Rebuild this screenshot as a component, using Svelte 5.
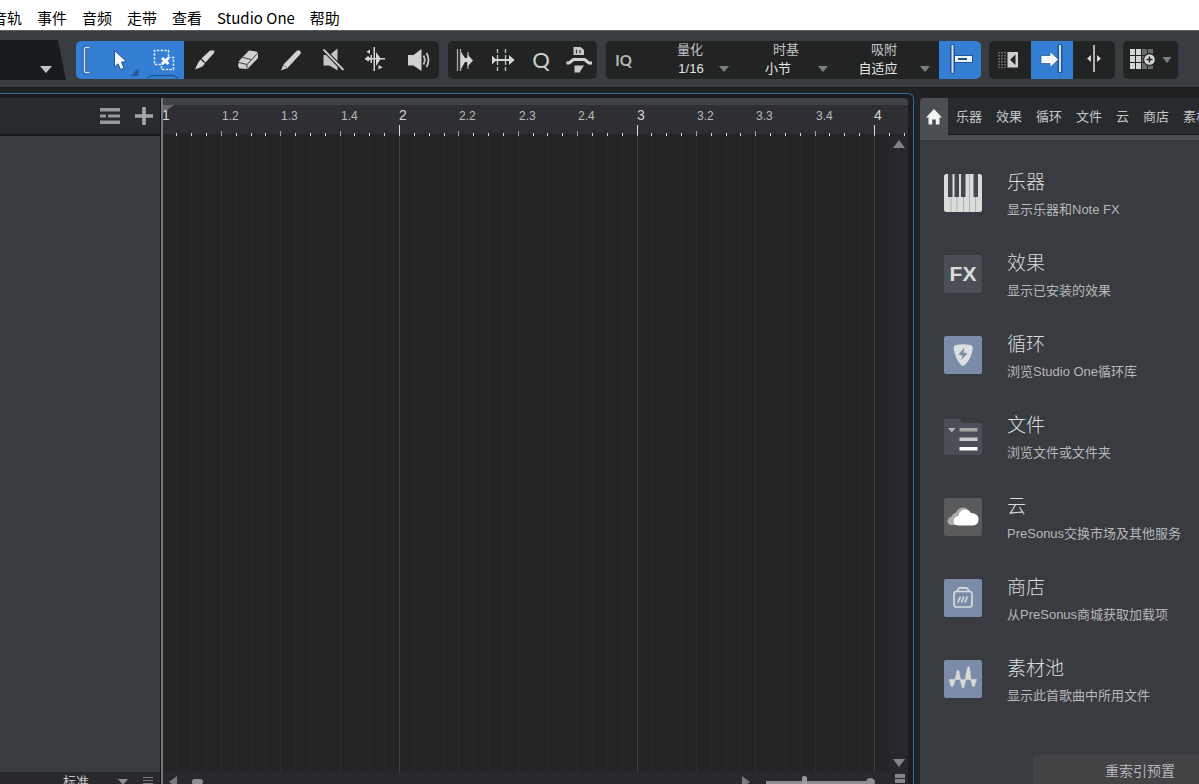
<script>
  const menus = ['音轨', '事件', '音频', '走带', '查看', 'Studio One', '帮助'];

  const fields = [
    { id: 'quantize', label: '量化', options: ['1/16', '1/8', '1/4'] },
    { id: 'timebase', label: '时基', options: ['小节', '秒', '帧'] },
    { id: 'snap', label: '吸附', options: ['自适应', '小节', '量化'] }
  ];

  const tabs = ['乐器', '效果', '循环', '文件', '云', '商店', '素材池'];

  const entries = [
    { icon: 'keys', title: '乐器', text: '显示乐器和Note FX' },
    { icon: 'fx', title: '效果', text: '显示已安装的效果' },
    { icon: 'loops', title: '循环', text: '浏览Studio One循环库' },
    { icon: 'files', title: '文件', text: '浏览文件或文件夹' },
    { icon: 'cloud', title: '云', text: 'PreSonus交换市场及其他服务' },
    { icon: 'shop', title: '商店', text: '从PreSonus商城获取加载项' },
    { icon: 'pool', title: '素材池', text: '显示此首歌曲中所用文件' }
  ];

  const BAR_WIDTH = 237.5;
  let timelineWidth = $state(0);

  // One tick per sixteenth note, up to the right edge of the timeline.
  const ticks = $derived(
    Array.from({ length: Math.ceil((timelineWidth * 16) / BAR_WIDTH) }, (_, i) => ({
      x: Math.floor((i * BAR_WIDTH) / 16),
      kind: i % 16 === 0 ? 'bar' : i % 4 === 0 ? 'beat' : 'step',
      label:
        i % 16 === 0
          ? `${i / 16 + 1}`
          : i % 4 === 0
            ? `${Math.floor(i / 16) + 1}.${(i % 16) / 4 + 1}`
            : ''
    }))
  );
  const tickTop = { bar: 20, beat: 26, step: 28 };

  let tool = $state('arrow');
  let zoom = $state(38);

  const tools = [
    { id: 'arrow', name: '箭头工具' },
    { id: 'range', name: '范围工具' },
    { id: 'split', name: '分割工具' },
    { id: 'erase', name: '擦除工具' },
    { id: 'paint', name: '绘制工具' },
    { id: 'mute', name: '静音工具' },
    { id: 'bend', name: '弯曲工具' },
    { id: 'listen', name: '监听工具' }
  ];
</script>

{#snippet toolIcon(id)}
  <svg class="ico" width="43" height="38" viewBox="0 0 43 38" aria-hidden="true">
    {#if id === 'arrow'}
      <path d="M16.5 9.5 L28.5 20.5 L23.5 21.2 L26 27 L22.5 28.6 L20 22.8 L16.5 26Z" fill="#f4f6f8" stroke="#1f5593" stroke-width="1" />
      <path d="M40.500 27 V35 H32.500Z" fill="#235a9c" />
    {:else if id === 'range'}
      <g fill="none" stroke="#d9e8f8" stroke-width="1.500" stroke-dasharray="2.500 1.300">
        <path d="M20 23.500 H13.500 V9.500 H27.500 V16" />
        <path d="M27 16.500 H32.500 V28.500 H20.500 V23" />
      </g>
      <path d="M21 17 L27.500 23 M27.500 17 L21 23" stroke="#fff" stroke-width="3" />
      <path d="M6 37.500 L10 34.500 H33 L37 37.500" fill="none" stroke="#1f5797" stroke-width="1.500" />
    {:else if id === 'split'}
      <path d="M17.500 17.500 L26 9.500 L30.500 9.500 L30 12 L21.500 21.500Z M16.500 18.500 L21 22.500 L18.500 25.500 L11 28.500 L14 22Z" fill="#d4d6d6" />
    {:else if id === 'erase'}
      <path d="M12 20 L22 9.500 L29.500 10.500 L31 12.500 V17 L20.500 28 L12.500 27.500 L11 25Z" fill="#cfd1d1" />
      <path d="M12 21.500 L20 23.500 L30.500 12.500 M20 23.500 V27.500 M16 16.500 L24 18.500" fill="none" stroke="#3a3c3c" stroke-width="1" />
    {:else if id === 'paint'}
      <path d="M26.500 10 Q29 8.500 30.500 10.500 Q31.500 12 30 13.500 L17.500 27 L11 29.500 L13.500 23.500Z" fill="#d0d2d2" />
      <path d="M13 23.500 L17.500 27.500" stroke="#6c6f6f" stroke-width="1" />
    {:else if id === 'mute'}
      <path d="M10.500 14 H16.500 L24.500 7.500 V29.500 L16.500 24.500 H10.500Z" fill="#c4c6c6" />
      <path d="M10.500 8.500 L30.500 29" stroke="#212423" stroke-width="4" />
      <path d="M10.500 8.500 L30.500 29" stroke="#c8caca" stroke-width="1.800" />
    {:else if id === 'bend'}
      <g fill="#d4d6d6">
        <rect x="17.500" y="6" width="1.500" height="24" />
        <rect x="9" y="17" width="20" height="1.500" />
        <path d="M14 8.500 V13 L10.500 10.800Z M9 17.800 L12 15 L15 17.800 L12 20.500Z M20 11 L24 16.500 V19 L20 25Z M22.500 24 L26.500 26.300 L22.500 28.500Z" />
        <rect x="14.500" y="14" width="1.500" height="8" />
      </g>
    {:else if id === 'listen'}
      <path d="M9 14 H14.500 L22.500 8 V30 L14.500 24.500 H9Z" fill="#d0d2d2" />
      <path d="M24.500 14.500 Q27 19 24.500 23.500 M27.500 12 Q31.500 19 27.500 26" fill="none" stroke="#c4c6c6" stroke-width="1.800" />
    {/if}
  </svg>
{/snippet}

{#snippet entryIcon(id)}
  <svg class="tile" width="38" height="38" viewBox="0 0 38 38" aria-hidden="true">
    {#if id === 'keys'}
      <rect width="38" height="38" rx="2.500" fill="#dadcdc" />
      <g stroke="#adb0b1" stroke-width="1">
        <path d="M7 22V38M13 22V38M19.500 22V38M25.500 0V38M31.500 22V38" />
      </g>
      <g fill="#42474d">
        <rect x="4" width="4.500" height="23" /><rect x="10.500" width="4.500" height="23" />
        <rect x="17" width="4.500" height="23" /><rect x="29.500" width="4.500" height="23" />
      </g>
    {:else if id === 'fx'}
      <rect width="38" height="38" rx="2.500" fill="#4a4e55" />
      <text x="19" y="26" text-anchor="middle" class="fx">FX</text>
    {:else if id === 'loops'}
      <rect width="38" height="38" rx="2" fill="#7b8ca9" />
      <path d="M9.500 12 Q9.500 9.500 12 9 Q19 7.500 26.500 9 Q28.800 9.500 28.800 12 Q28 21 21.500 28.500 Q19 31 16.500 28.500 Q10.500 21 9.500 12Z" fill="#dcdfe0" />
      <path d="M20.500 11.500 L14.500 18.500 L18.500 19.500 L17 24 L23.500 17.500 L19.500 16.500Z" fill="#7b8ca9" />
    {:else if id === 'files'}
      <path d="M0 3.500 Q0 1.500 2 1.500 H14 Q15.500 1.500 16 3 L17.500 6 H36 Q38 6 38 8 V36 Q38 38 36 38 H2 Q0 38 0 36Z" fill="#4a4e56" />
      <path d="M4 11 H11.500 L7.800 15.500Z" fill="#b3b5b7" />
      <rect x="15.500" y="11" width="18" height="3.500" fill="#a4a6a8" />
      <rect x="15.500" y="20.500" width="18" height="3.500" fill="#c9cbcc" />
      <rect x="15.500" y="30" width="18" height="3.500" fill="#fff" />
    {:else if id === 'cloud'}
      <rect width="38" height="38" rx="2.500" fill="#595a5c" />
      <path d="M7 27 Q3.500 26.500 3.500 23 Q3.500 19.500 7.500 18.500 Q8.500 15.500 12 14.500 Q14.500 9 19.500 9.500 Q24 10 25 14 L18 27Z" fill="#a9abad" />
      <path d="M14 27.500 Q9.500 27 9.500 22.500 Q10 18.500 14.500 18 Q15.500 12 20.500 11.500 Q25.500 11.500 27 15 Q34.500 15 34.500 21.500 Q34.500 27 29 27.500Z" fill="#fff" />
    {:else if id === 'shop'}
      <rect width="38" height="38" rx="2" fill="#7b8ca9" />
      <g fill="none" stroke="#dadbd9" stroke-width="1.700">
        <rect x="10" y="12.500" width="18" height="15.500" rx="2.500" />
        <path d="M13 12.500 L14.500 9.500 Q15 8.800 16 8.800 H22 Q23 8.800 23.500 9.500 L25 12.500" />
        <path d="M13.800 23.500 L16.500 17.500 M17.300 23.500 L20 17.500 M20.800 23.500 L23.500 17.500" />
      </g>
    {:else if id === 'pool'}
      <rect width="38" height="38" rx="2" fill="#7b8ca9" />
      <path d="M5 19.500 H11 L13 11 Q14 9 15 11 L16.500 19.500 H21 L23.500 7.500 Q24.500 5.500 25.500 7.500 L27 19.500 H32.500 L30.500 26 Q29.500 28 28.500 26 L26.500 19.500 H21.800 L20 27 Q19 29.500 18 27 L16.200 19.500 H11.500 L9 26 Q8 28 7 26Z" fill="#d9dad6" stroke="#d9dad6" stroke-width=".5" />
    {/if}
  </svg>
{/snippet}

<div class="app">
  <nav class="menubar" aria-label="菜单">
    {#each menus as menu}
      <button>{menu}</button>
    {/each}
  </nav>

  <header class="toolbar">
    <button class="device" aria-label="选择设备">
      <svg width="66" height="40" viewBox="0 0 66 40" aria-hidden="true">
        <path d="M0 0 H58 L66 40 H0Z" fill="#191c1f" />
        <path d="M40 26 H52 L46 33Z" fill="#c4c6c8" />
      </svg>
    </button>

    <div class="group tools">
      <span class="bracket">
        <svg class="ico" width="22" height="38" viewBox="0 0 22 38" aria-hidden="true">
          <path d="M13.500 6.500 H9.500 Q8.500 6.500 8.500 7.500 V30.500 Q8.500 31.500 9.500 31.500 H13.500" fill="none" stroke="#235a9c" stroke-width="3.500" />
          <path d="M13.500 6.500 H9.500 Q8.500 6.500 8.500 7.500 V30.500 Q8.500 31.500 9.500 31.500 H13.500" fill="none" stroke="#d5e2ee" stroke-width="1.500" />
        </svg>
      </span>
      {#each tools as t}
        <button
          class:on={t.id === tool || (tool === 'arrow' && t.id === 'range')}
          aria-label={t.name}
          onclick={() => (tool = t.id)}>{@render toolIcon(t.id)}</button>
      {/each}
    </div>

    <div class="group actions">
      <button aria-label="去除静音">
        <svg class="ico" width="37" height="38" viewBox="0 0 37 38" aria-hidden="true">
          <path d="M9.500 8V30M12.500 8V30M20 11V28" stroke="#a9abab" stroke-width="1.300" />
          <path d="M13 11 L17 17 H19.500 V13.500 L25 19.500 L19.500 25.500 V21 H17 L13 28Z" fill="#d4d6d6" />
        </svg>
      </button>
      <button aria-label="拉伸">
        <svg class="ico" width="37" height="38" viewBox="0 0 37 38" aria-hidden="true">
          <path d="M12.500 8V30M20.500 8V30" stroke="#bbbdbd" stroke-width="1.400" stroke-dasharray="4 2" />
          <path d="M7 18 H29 V20 H7Z M7 14.500 L11.500 19 L7 23.500Z M24 14 L29.500 19 L24 24Z" fill="#d4d6d6" />
        </svg>
      </button>
      <button class="q" aria-label="量化">Q</button>
      <button aria-label="宏">
        <svg class="ico" width="37" height="38" viewBox="0 0 37 38" aria-hidden="true">
          <path d="M13.500 6 H20.500 L24 9 V14 H13.500Z" fill="#c9cbcb" />
          <path d="M16.500 8.500 V12.500 M20 9 V12.500" stroke="#3a3c3c" stroke-width="1.200" />
          <path d="M6.500 22 H9 L13.500 18.500 H24.500 L29 22 H32" fill="none" stroke="#d0d2d2" stroke-width="3" stroke-linejoin="round" />
          <path d="M14.500 24.500 H24 L19.500 31.500 H14.500Z" fill="#c9cbcb" />
        </svg>
      </button>
    </div>

    <div class="group settings">
      <button class="iq">IQ</button>
      {#each fields as f}
        <div class="field {f.id}">
          <label for={f.id}>{f.label}</label>
          <div class="pick">
            <select id={f.id}>
              {#each f.options as o}<option>{o}</option>{/each}
            </select>
            <svg width="10" height="6" viewBox="0 0 10 6" aria-hidden="true"><path d="M0 0H10L5 6Z" fill="#7c7f80" /></svg>
          </div>
        </div>
      {/each}
      <button class="on snapbtn" aria-label="启用吸附">
        <svg class="ico" width="42" height="38" viewBox="0 0 42 38" aria-hidden="true">
          <rect x="11" y="3" width="5" height="30" rx="2" fill="#22568f" />
          <rect x="12.500" y="4" width="2" height="28" fill="#cfdeed" />
          <rect x="16" y="14" width="18" height="8" fill="#22568f" />
          <rect x="16" y="15" width="17" height="6" fill="#eef3f8" />
          <rect x="19" y="17" width="9" height="2" fill="#22568f" />
        </svg>
      </button>
    </div>

    <div class="group follow">
      <button aria-label="时间线">
        <svg class="ico" width="42" height="38" viewBox="0 0 42 38" aria-hidden="true">
          <path d="M10 11V27M13 11V27M16 11V27" stroke="#8f9292" stroke-width="1.300" stroke-dasharray="1.500 1.500" />
          <rect x="18.500" y="11" width="10.500" height="15.500" fill="#cfd1d1" />
          <path d="M26.500 13.500 V24 L21 18.800Z" fill="#212423" />
        </svg>
      </button>
      <button class="on" aria-label="自动滚动">
        <svg class="ico" width="42" height="38" viewBox="0 0 42 38" aria-hidden="true">
          <rect x="26.500" y="3" width="5" height="29" rx="2" fill="#22568f" />
          <path d="M10 14.500 H19 V10.500 L27.500 18.500 L19 26.500 V22.500 H10Z" fill="#f4f6f8" stroke="#22568f" stroke-width=".7" />
          <rect x="28" y="4" width="2" height="27" fill="#cfdeed" />
        </svg>
      </button>
      <button aria-label="光标跟随">
        <svg class="ico" width="42" height="38" viewBox="0 0 42 38" aria-hidden="true">
          <rect x="20" y="4" width="2" height="27" fill="#aeb0b0" />
          <path d="M18 14 V21 L14 17.500Z M24 14 V21 L28 17.500Z" fill="#d4d6d6" />
        </svg>
      </button>
    </div>

    <div class="group view">
      <button aria-label="网格选项">
        <svg class="ico" width="55" height="38" viewBox="0 0 55 38" aria-hidden="true">
          <path d="M7 8h5v6H7zM13 8h5v6h-5zM7 15h5v6H7zM13 15h5v6h-5zM7 22h5v6H7zM13 22h5v6h-5z" fill="#d4d6d6" />
          <path d="M19 8h5v6h-5zM25 8h5v6h-5zM19 15h5v6h-5zM19 22h5v6h-5zM25 22h5v6h-5z" fill="#686b6c" />
          <circle cx="26.500" cy="18.500" r="6.500" fill="#212423" />
          <circle cx="26.500" cy="18.500" r="5.300" fill="#d4d6d6" />
          <path d="M23.500 18.500H29.500M26.500 15.500V21.500" stroke="#212423" stroke-width="1.500" />
          <path d="M39.500 16H48.500L44 22Z" fill="#7c7f80" />
        </svg>
      </button>
    </div>
  </header>

  <main>
    <section class="arrange">
      <div class="tracks">
        <div class="tracks-head">
          <button aria-label="轨道列表">
            <svg width="20" height="16" viewBox="0 0 20 16" aria-hidden="true">
              <path d="M0 0h20v3.500H0zM0 12.500h20V16H0zM0 6.500h6v3H0zM8 6.500h12v3H8z" fill="#96999b" />
            </svg>
          </button>
          <button aria-label="添加轨道">
            <svg width="18" height="18" viewBox="0 0 18 18" aria-hidden="true">
              <path d="M7.200 0h3.600v7.200H18v3.600h-7.200V18H7.200v-7.200H0V7.200h7.200z" fill="#a4a6a8" />
            </svg>
          </button>
        </div>
        <div class="tracks-body"></div>
        <div class="tracks-foot">
          <select aria-label="轨道高度"><option>标准</option><option>小</option><option>大</option></select>
          <svg width="10" height="6" viewBox="0 0 10 6" aria-hidden="true"><path d="M0 0H10L5 6Z" fill="#8b8d8f" /></svg>
          <svg width="10" height="10" viewBox="0 0 10 10" aria-hidden="true"><path d="M0 .5H10M0 3.500H10M0 6.500H10M0 9.500H10" stroke="#77797b" stroke-width="1.200" /></svg>
        </div>
      </div>

      <div class="timeline" bind:clientWidth={timelineWidth}>
        <div class="overview"></div>
        <svg class="ruler" width="100%" height="31" aria-label="时间标尺">
          <rect y="29" width="100%" height="2" fill="#222425" />
          <path d="M0 0H12L1 8Z" fill="#66686b" />
          {#each ticks as t}
            <rect x={t.x} y={tickTop[t.kind]} width="1" height={t.kind === 'step' ? 3 : 31 - tickTop[t.kind]} fill={t.kind === 'beat' ? '#a6a7a7' : '#d6d7d6'} />
            {#if t.label}
              <text x={t.x} y="15" class={t.kind}>{t.label}</text>
            {/if}
          {/each}
        </svg>
        <div class="canvas">
          <svg class="grid" aria-hidden="true">
            {#each ticks as t}
              <rect class={t.kind} x={t.x} width="1" height="100%" />
            {/each}
          </svg>
          <div class="vscroll">
            <button aria-label="向上滚动"><svg width="12" height="8" viewBox="0 0 12 8" aria-hidden="true"><path d="M0 8H12L6 0Z" fill="#828486" /></svg></button>
            <button aria-label="向下滚动"><svg width="12" height="8" viewBox="0 0 12 8" aria-hidden="true"><path d="M0 0H12L6 8Z" fill="#828486" /></svg></button>
          </div>
        </div>
        <div class="hscroll">
          <button aria-label="向左滚动"><svg width="8" height="12" viewBox="0 0 8 12" aria-hidden="true"><path d="M8 0V12L0 6Z" fill="#77797b" /></svg></button>
          <div class="rail"><span class="thumb"></span></div>
          <button aria-label="向右滚动"><svg width="8" height="12" viewBox="0 0 8 12" aria-hidden="true"><path d="M0 0V12L8 6Z" fill="#77797b" /></svg></button>
          <div class="zoom">
            <input type="range" min="0" max="100" bind:value={zoom} aria-label="水平缩放" />
            <span class="knob"></span>
          </div>
          <svg class="rows" width="10" height="16" viewBox="0 0 10 16" aria-hidden="true"><path d="M0 0h10v4H0zM0 5h10v4H0z" fill="#828486" /></svg>
        </div>
      </div>
    </section>

    <aside class="browser">
      <div class="tabs">
        <button class="home" aria-label="主页">
          <svg width="16" height="16" viewBox="0 0 16 16" aria-hidden="true"><path d="M8 0L16 8.500H13.500V15.500H9.800V10.500H6.200V15.500H2.500V8.500H0Z" fill="#f2f3f3" /></svg>
        </button>
        <div class="names">
          {#each tabs as t}<button>{t}</button>{/each}
        </div>
      </div>
      <ul>
        {#each entries as e}
          <li>
            <button>
              {@render entryIcon(e.icon)}
              <span class="words">
                <span class="title">{e.title}</span>
                <span class="text">{e.text}</span>
              </span>
            </button>
          </li>
        {/each}
      </ul>
      <button class="reindex">重索引预置</button>
    </aside>
  </main>
</div>

<style>
  :global(body) {
    margin: 0;
    overflow: hidden;
    background: #1f2122;
  }
  .app {
    display: flex;
    flex-direction: column;
    height: calc(100vh + 8px);
    overflow: hidden;
    color: #c4c6c7;
    font: 13px/18px 'Liberation Sans', 'Noto Sans CJK SC', sans-serif;
  }
  button,
  select {
    margin: 0;
    padding: 0;
    border: 0;
    background: none;
    color: inherit;
    font: inherit;
    white-space: nowrap;
  }
  svg {
    display: block;
    flex: none;
  }
  select {
    appearance: none;
  }

  .menubar {
    display: flex;
    flex: none;
    gap: 15px;
    height: 30px;
    padding-top: 4px;
    box-sizing: border-box;
    margin-left: -8px;
    background: #fff;
    color: #000;
    font: 15px/28px 'Noto Sans CJK SC', sans-serif;
  }

  .toolbar {
    display: flex;
    flex: none;
    align-items: center;
    gap: 8px;
    height: 58px;
    box-sizing: border-box;
    padding-top: 2px;
    border-top: 1px solid #5d6264;
    border-bottom: 1px solid #17191a;
    background: #393c40;
  }
  .device {
    margin-right: 2px;
  }
  .group {
    display: flex;
    flex: none;
    height: 38px;
    overflow: hidden;
    border-radius: 5px;
    background: #212423;
  }
  .group .on,
  .bracket {
    background: #347fd3;
  }
  .bracket {
    width: 22px;
  }
  .tools {
    width: 363px;
    margin-right: 1px;
  }
  .actions {
    width: 149px;
    margin-right: 1px;
  }
  .q {
    width: 38px;
    font: 22px/38px Lato, sans-serif;
    color: #cfd1d1;
  }
  .iq {
    width: 35px;
    font: bold 15px/38px Lato, sans-serif;
    color: #b4b6b6;
  }
  .field {
    display: flex;
    flex-direction: column;
    gap: 1px;
    width: 100px;
  }
  .quantize {
    width: 98px;
  }
  .field label {
    width: 90px;
    text-align: center;
  }
  .timebase label {
    width: 94px;
  }
  .quantize label {
    width: 98px;
  }
  .pick {
    display: flex;
    align-items: center;
    padding-left: 9px;
    color: #e4e5e5;
  }
  .pick select {
    width: 60px;
    height: 18px;
    margin-right: 10px;
    text-align: center;
    text-align-last: center;
  }
  .quantize .pick {
    padding-left: 20px;
  }
  .quantize select {
    margin-right: -2px;
  }
  .snap select {
    margin-right: 12px;
  }
  .snapbtn {
    width: 42px;
  }

  main {
    display: flex;
    flex: 1;
    min-height: 0;
    gap: 6px;
    padding-top: 5px;
    background: #1f2122;
  }
  .arrange {
    display: flex;
    flex: 1;
    min-width: 0;
    padding: 4px 5px 0 0;
    border: solid #33689f;
    border-width: 1px 1px 0 0;
    border-radius: 0 6px 0 0;
    background: #1b1d1f;
  }
  .tracks {
    display: flex;
    flex-direction: column;
    width: 160px;
    flex: none;
    border-right: 1px solid #111314;
  }
  .tracks-head {
    display: flex;
    justify-content: flex-end;
    align-items: center;
    gap: 15px;
    height: 36px;
    padding-right: 7px;
    border-bottom: 2px solid #151718;
    background: #282b2d;
  }
  .tracks-body {
    flex: 1;
    background: #383c40;
  }
  .tracks-foot {
    display: flex;
    justify-content: flex-end;
    align-items: center;
    gap: 15px;
    height: 20px;
    padding-right: 7px;
    background: #28292c;
  }
  .tracks-foot select {
    width: 28px;
    margin-right: 12px;
  }

  .timeline {
    display: flex;
    flex-direction: column;
    flex: 1;
    min-width: 0;
    overflow: hidden;
    border-left: 2px solid #77797b;
    border-radius: 0 4px 0 0;
  }
  .overview {
    height: 7px;
    background: #3f4246;
  }
  .ruler {
    width: calc(100% + 1px);
    margin-left: -1px;
    background: #2d2f32;
  }
  .ruler text {
    font: 12px 'Liberation Sans', sans-serif;
    fill: #b9bbbc;
    transform: translateX(1px);
  }
  .ruler .bar {
    font-size: 14px;
    fill: #d4d5d5;
    transform: none;
  }
  .canvas {
    display: flex;
    flex: 1;
    min-height: 0;
    background: #222425;
  }
  .grid {
    flex: 1;
    width: 0;
    margin-left: -1px;
    height: 100%;
  }
  .grid .step {
    fill: #27292a;
  }
  .grid .beat {
    fill: #2d2f30;
  }
  .grid .bar {
    fill: #3d3f40;
  }
  .vscroll {
    display: flex;
    flex-direction: column;
    justify-content: space-between;
    align-items: center;
    width: 18px;
    padding: 4px 0 5px;
    background: #27282b;
  }
  .hscroll {
    display: flex;
    align-items: center;
    height: 20px;
    padding: 0 3px 0 6px;
    background: #28292c;
  }
  .rail {
    flex: 1;
    padding: 0 15px;
  }
  .thumb {
    display: block;
    width: 11px;
    height: 6px;
    border-radius: 3px;
    background: #8b8d8f;
  }
  .zoom {
    display: flex;
    align-items: center;
    margin: 0 20px 0 16px;
  }
  .zoom input {
    appearance: none;
    width: 100px;
    height: 14px;
    margin: 0;
    background: linear-gradient(#8b8d8f, #8b8d8f) center / 100% 3px no-repeat;
  }
  .zoom input::-webkit-slider-thumb {
    appearance: none;
    width: 5px;
    height: 12px;
    border-radius: 2px;
    background: #97999b;
  }
  .knob {
    width: 9px;
    height: 9px;
    border-radius: 5px;
    background: #8b8d8f;
  }

  .browser {
    display: flex;
    flex-direction: column;
    flex: none;
    width: 279px;
    margin-top: 5px;
    overflow: hidden;
    border-radius: 4px 0 0 0;
    background: #383b3f;
  }
  .tabs {
    display: flex;
    flex: none;
    height: 37px;
    border-bottom: 5px solid #4b4f53;
    background: #282b2d;
  }
  .home {
    display: flex;
    flex: none;
    align-items: center;
    justify-content: center;
    width: 28px;
    background: #4b4f53;
  }
  .names {
    display: flex;
    flex: 1;
    gap: 14px;
    padding: 2px 0 0 8px;
    overflow: hidden;
    border-bottom: 1px solid #151718;
  }
  ul {
    flex: 1;
    margin: 0;
    padding: 31px 0 0 24px;
    list-style: none;
  }
  li {
    height: 81px;
  }
  li button {
    display: flex;
    align-items: flex-start;
    gap: 25px;
    text-align: left;
  }
  .tile {
    margin-top: 3px;
  }
  .words {
    display: flex;
    flex-direction: column;
    gap: 6px;
  }
  .title {
    font-size: 19px;
    line-height: 24px;
    font-weight: 300;
    color: #dcddde;
  }
  .text {
    color: #b6b8ba;
  }
  .fx {
    font: bold 21px 'Liberation Sans', sans-serif;
    fill: #dcddda;
  }
  .reindex {
    flex: none;
    width: 214px;
    height: 32px;
    margin: 0 0 5px 113px;
    border-radius: 4px;
    background: #434346;
    font-size: 14px;
    color: #b4b6b8;
  }
</style>
